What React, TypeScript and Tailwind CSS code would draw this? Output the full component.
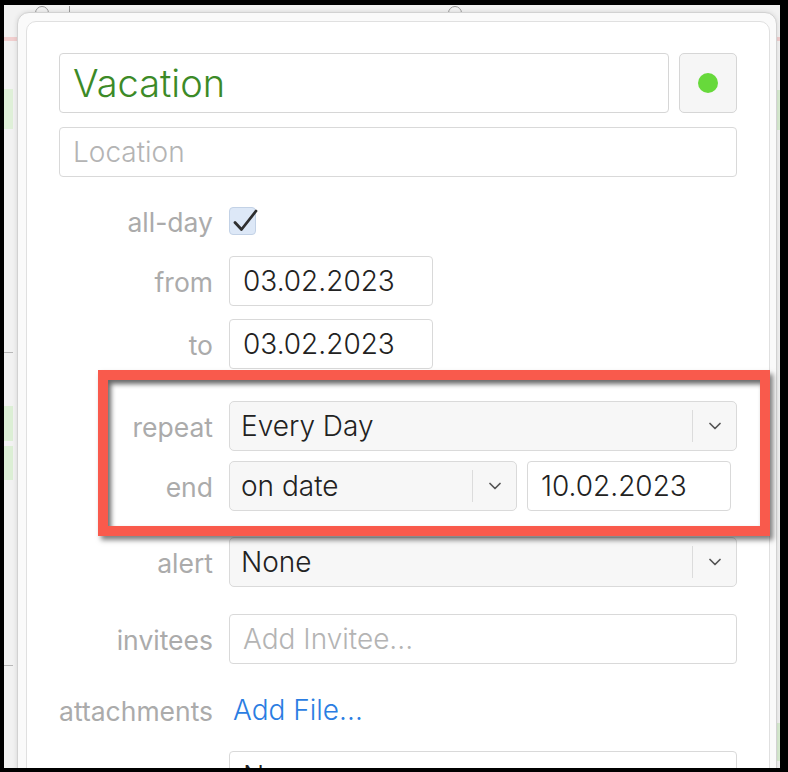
import type { ReactNode } from "react";

const Chevron = () => (
  <svg width="12" height="8" viewBox="0 0 12 8" fill="none" aria-hidden>
    <path d="M1 1.5l5 5 5-5" stroke="#555" strokeWidth="1.7" strokeLinecap="round" strokeLinejoin="round" />
  </svg>
);

function Row({ label, className = "", children }: { label: string; className?: string; children: ReactNode }) {
  return (
    <div className={`flex items-center gap-[16px] ${className}`}>
      <div className="w-[154px] shrink-0 pt-[2px] text-right text-[26.5px] font-normal leading-none text-[#ababab]">{label}</div>
      {children}
    </div>
  );
}

function Select({ value, className = "" }: { value: string; className?: string }) {
  return (
    <div className={`flex h-[50px] items-center rounded-[5px] border border-[#dadada] bg-[#f7f7f7] ${className}`}>
      <span className="flex-1 pl-[11px] text-[28px] leading-none text-[#222]">{value}</span>
      <span className="h-[32px] w-px bg-[#dcdcdc]" />
      <span className="flex w-[43px] justify-center">
        <Chevron />
      </span>
    </div>
  );
}

function Field({ value, placeholder, className = "" }: { value?: string; placeholder?: string; className?: string }) {
  return (
    <div className={`flex h-[50px] items-center rounded-[4px] border border-[#d9d9d9] bg-white pl-[13px] text-[28px] leading-none ${className}`}>
      {value ? <span className="text-[#222]">{value}</span> : <span className="text-[#b4b4b4]">{placeholder}</span>}
    </div>
  );
}

export default function App() {
  return (
    <div className="h-[772px] w-[788px] bg-black pb-[4px] pl-[4px] pr-[8px] pt-[5px] font-[Inter,sans-serif] font-light">
      <div className="relative h-full overflow-hidden bg-[#f2f2f2]">
        {/* calendar behind the popover */}
        <div className="absolute left-[31px] top-[1px] h-[14px] w-[14px] rounded-full border-[1.5px] border-[#9a9a9a]" />
        <div className="absolute left-[65px] top-[1px] h-[8px] w-px bg-[#9a9a9a]" />
        <div className="absolute left-[444px] top-[1px] h-[14px] w-[14px] rounded-full border-[1.5px] border-[#9a9a9a]" />
        <div className="absolute left-0 right-0 top-[32px] h-[4px] bg-[#f1cfcf]" />
        <div className="absolute left-0 top-[84px] h-[40px] w-[9px] bg-[#dff0d8]" />
        <div className="absolute right-0 top-[85px] h-[40px] w-[8px] bg-[#d9edd2]" />
        <div className="absolute left-0 top-[347px] h-px w-[9px] bg-[#b8b8b8]" />
        <div className="absolute left-0 top-[401px] h-[35px] w-[9px] bg-[#dcefd5]" />
        <div className="absolute left-0 top-[441px] h-[34px] w-[9px] bg-[#dcefd5]" />
        <div className="absolute left-0 top-[660px] h-px w-[9px] bg-[#b8b8b8]" />
        <div className="absolute right-0 top-[718px] h-[38px] w-[8px] bg-[#d9edd2]" />

        {/* event popover */}
        <div className="absolute left-[13px] top-[7px] h-[800px] w-[760px] rounded-[12px] border border-[#d2d2d2] bg-[#fafafa] pl-[8px] pr-[6px] pt-[8px] shadow-[0_0_5px_rgba(0,0,0,0.12)]">
          <div className="h-full rounded-[10px] border border-[#e0e0e0] bg-white px-[32px] pt-[31px]">
            <div className="flex gap-[10px]">
              <div className="flex h-[60px] flex-1 items-center rounded-[4px] border border-[#d6d6d6] pl-[13px] text-[38px] leading-none text-[#3c8a27]">
                Vacation
              </div>
              <div className="flex h-[60px] w-[58px] items-center justify-center rounded-[5px] border border-[#d6d6d6] bg-[#f6f6f6]">
                <span className="h-[20px] w-[20px] rounded-full bg-[#67d93b]" />
              </div>
            </div>
            <Field placeholder="Location" className="mt-[14px]" />

            <Row label="all-day" className="mt-[30px] h-[28px]">
              <div className="relative h-[28px] w-[27px] rounded-[4px] border border-[#c3d2e6] bg-[#dde8f7]">
                <svg className="absolute left-[3px] top-[1px] overflow-visible" width="26" height="22" viewBox="0 0 26 22" fill="none" aria-hidden>
                  <path d="M2 13.5l6.5 7L23 2" stroke="#2f2f2f" strokeWidth="2.8" strokeLinecap="round" strokeLinejoin="round" />
                </svg>
              </div>
            </Row>
            <Row label="from" className="mt-[21px]">
              <Field value="03.02.2023" className="h-[49px] w-[204px]" />
            </Row>
            <Row label="to" className="mt-[13px]">
              <Field value="03.02.2023" className="h-[49px] w-[204px]" />
            </Row>
            <Row label="repeat" className="mt-[32px]">
              <Select value="Every Day" className="flex-1" />
            </Row>
            <Row label="end" className="mt-[10px]">
              <Select value="on date" className="w-[288px]" />
              <Field value="10.02.2023" className="-ml-[6px] w-[204px]" />
            </Row>
            <Row label="alert" className="mt-[26px]">
              <Select value="None" className="h-[49px] flex-1" />
            </Row>
            <Row label="invitees" className="mt-[27px]">
              <Field placeholder="Add Invitee..." className="flex-1" />
            </Row>
            <Row label="attachments" className="mt-[21px] h-[50px]">
              <span className="pl-[4px] text-[28px] leading-none text-[#2b7de2]">Add File...</span>
            </Row>
            <Row label="" className="mt-[16px]">
              <Field value="None" className="flex-1" />
            </Row>
          </div>
        </div>

        {/* annotation frame */}
        <div className="absolute left-[94px] top-[365px] h-[166px] w-[672px] border-[10px] border-[#f95a4c] shadow-[3px_4px_5px_rgba(0,0,0,0.5),inset_3px_4px_5px_rgba(0,0,0,0.6)]" />
      </div>
    </div>
  );
}
